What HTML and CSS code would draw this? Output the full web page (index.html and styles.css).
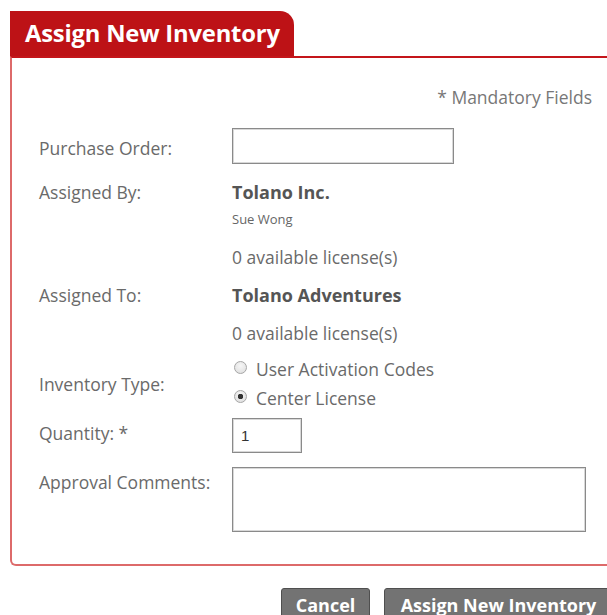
FILE: index.html
```html
<!DOCTYPE html>
<html lang="en">
<head>
<meta charset="utf-8">
<title>Assign New Inventory</title>
<link rel="stylesheet" href="styles.css">
</head>
<body>
<div class="page">
  <div class="tab"><h1 class="tab-title">Assign New Inventory</h1></div>
  <div class="panel">
    <div class="mandatory">* Mandatory Fields</div>
    <div class="form">
      <div class="row row-po">
        <label class="label" for="po">Purchase Order:</label>
        <input class="text-input po-input" id="po" type="text">
      </div>
      <div class="row row-by">
        <div class="label">Assigned By:</div>
        <div class="value">
          <div class="org">Tolano Inc.</div>
          <div class="person">Sue Wong</div>
          <div class="licenses">0 available license(s)</div>
        </div>
      </div>
      <div class="row row-to">
        <div class="label">Assigned To:</div>
        <div class="value">
          <div class="org">Tolano Adventures</div>
          <div class="licenses licenses-to">0 available license(s)</div>
        </div>
      </div>
      <div class="row row-type">
        <div class="label">Inventory Type:</div>
        <div class="value radios">
          <label class="radio-line"><input class="radio" type="radio" name="type"> User Activation Codes</label>
          <label class="radio-line radio-line-2"><input class="radio" type="radio" name="type" checked> Center License</label>
        </div>
      </div>
      <div class="row row-qty">
        <label class="label" for="qty">Quantity: *</label>
        <input class="text-input qty-input" id="qty" type="text" value="1">
      </div>
      <div class="row row-comments">
        <label class="label" for="comments">Approval Comments:</label>
        <textarea class="text-input comments-input" id="comments"></textarea>
      </div>
    </div>
  </div>
  <div class="actions">
    <button class="btn btn-cancel" type="button">Cancel</button>
    <button class="btn btn-submit" type="button">Assign New Inventory</button>
  </div>
</div>
</body>
</html>
```

FILE: styles.css
```css
html, body {
  margin: 0;
  padding: 0;
  overflow: hidden;
  background: #fff;
}

body {
  font-family: "Open Sans", "Noto Sans", sans-serif;
  font-size: 17.5px;
  color: #6a6a6a;
}

.page {
  padding-left: 10px;
  padding-top: 11px;
  width: 620px;
}

/* header tab */
.tab {
  width: 284px;
  height: 45px;
  background: #bd1216;
  border-top-right-radius: 14px;
}

.tab-title {
  margin: 0;
  padding-left: 15px;
  font-size: 23.8px;
  font-weight: 700;
  line-height: 45px;
  color: #fff;
  letter-spacing: -0.2px;
}

/* form panel */
.panel {
  border-top: 2px solid #c4151a;
  border-left: 2px solid #dd6a6a;
  border-bottom: 2px solid #dd6a6a;
  border-bottom-left-radius: 6px;
  padding: 27px 38px 32px 27px;
}

.mandatory {
  text-align: right;
  line-height: 24px;
  color: #777;
}

.form {
  display: flex;
  flex-direction: column;
}

.row {
  display: grid;
  grid-template-columns: 193px 1fr;
  align-items: start;
}

.label {
  line-height: 24px;
  color: #6a6a6a;
}

.value {
  line-height: 24px;
}

.row-po { margin-top: 19px; align-items: center; }
.row-po .label { padding-top: 3px; }
.row-by { margin-top: 16px; }
.row-to { margin-top: 14px; }
.row-type { margin-top: 12px; align-items: center; }
.row-qty { margin-top: 8px; align-items: center; }
.row-qty .label { padding-bottom: 5px; }
.row-comments { margin-top: 14px; }
.row-comments .label { padding-top: 3px; }

.org {
  font-size: 18px;
  font-weight: 700;
  color: #555;
}

.person {
  font-size: 13px;
  line-height: 18px;
  margin-top: 6px;
  color: #666;
}

.licenses { margin-top: 17px; }
.licenses-to { margin-top: 14px; }

.text-input {
  box-sizing: border-box;
  border: 1px solid #8a8a8a;
  box-shadow: inset 0 0 0 1px #d8d8d8;
  font-family: Arial, "Liberation Sans", sans-serif;
  font-size: 15px;
  color: #333;
  margin: 0;
  padding: 0 8px;
  background: #fff;
  outline: none;
}

.po-input { width: 222px; height: 36px; }
.qty-input { width: 70px; height: 35px; }
.comments-input { width: 354px; height: 65px; resize: none; display: block; }

/* radio buttons */
.radios { display: flex; flex-direction: column; }

.radio-line {
  display: flex;
  align-items: center;
  line-height: 24px;
  color: #6a6a6a;
}

.radio-line-2 { margin-top: 5px; }

.radio {
  appearance: none;
  -webkit-appearance: none;
  width: 13px;
  height: 13px;
  margin: 0 9px 0 2px;
  border-radius: 50%;
  border: 1px solid #a6a6a6;
  background: radial-gradient(circle at 50% 35%, #f6f6f6 0%, #dcdcdc 100%);
  box-sizing: border-box;
  position: relative;
  top: -2px;
}

.radio:checked {
  background:
    radial-gradient(circle, #333 0 2.5px, transparent 3px),
    radial-gradient(circle at 50% 35%, #f6f6f6 0%, #dcdcdc 100%);
}

/* action buttons */
.actions {
  display: flex;
  justify-content: flex-end;
  gap: 14px;
  margin-top: 22px;
  padding-right: 17px;
}

.btn {
  font-family: "Open Sans", "Noto Sans", sans-serif;
  font-weight: 700;
  font-size: 18px;
  color: #fff;
  background: #737373;
  border: 1px solid #4f4f4f;
  border-radius: 3px;
  height: 34px;
  padding: 0 10px;
  line-height: 32px;
}

.btn-cancel { width: 89px; }
.btn-submit { width: 229px; }
```
